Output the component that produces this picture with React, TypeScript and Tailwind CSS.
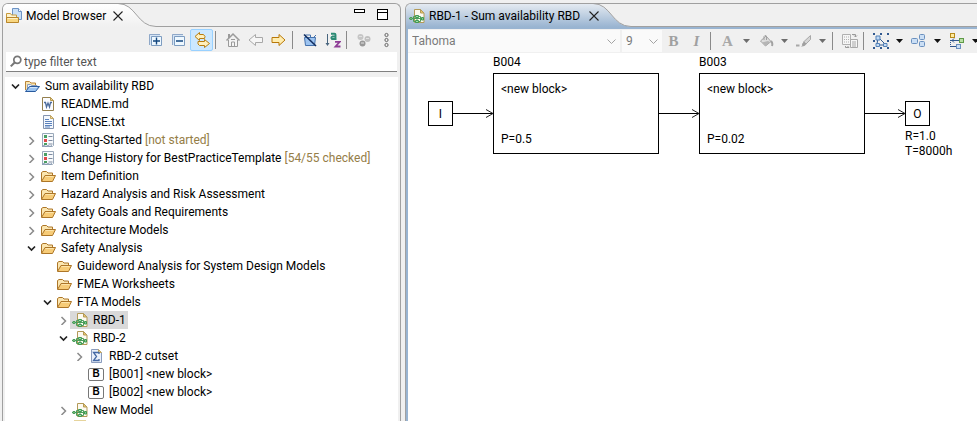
import type { ReactNode } from "react";

/* ---------- icons ---------- */

function Svg({ children, size = 16 }: { children: ReactNode; size?: number }) {
  return (
    <svg width={size} height={size} viewBox="0 0 16 16" fill="none" className="block shrink-0" aria-hidden="true">
      {children}
    </svg>
  );
}

const FolderIcon = () => (
  <Svg>
    <path d="M1.5 13V4.5L3 3.5h3.5L8 5h4.5v3" fill="#fbe6b0" stroke="#ad7628" />
    <path d="M1.5 13.5L5 7.5h10.5L12.5 13.5z" fill="#f7cc78" stroke="#ad7628" strokeLinejoin="round" />
    <path d="M5.5 8.5h8" stroke="#fde5ab" />
  </Svg>
);

const ProjectIcon = () => (
  <Svg>
    <path d="M1.5 12V3.5h4L7 5h4.5v3" fill="#fbe6b0" stroke="#b98539" />
    <path d="M3.5 12V6.5h3L8 7.5h5v2" fill="#e9f1fb" stroke="#8a9cba" />
    <path d="M1.5 13.5L5.5 8.5h10L11.5 13.5z" fill="#9cc4f0" stroke="#285a9e" strokeLinejoin="round" />
    <path d="M6 9.5h7" stroke="#d3e6fb" />
  </Svg>
);

const WordIcon = () => (
  <Svg>
    <path d="M2.5 1.5h8l3 3v10h-11z" fill="#fbfcff" stroke="#94804e" />
    <path d="M10.5 1.5v3h3z" fill="#e8cf93" stroke="#b89a50" />
    <path d="M4 6.5h1.5l1 4.5L8 7l1.5 4 1-4.5H12" stroke="#4d6c9c" strokeWidth="1.3" />
  </Svg>
);

const TextFileIcon = () => (
  <Svg>
    <path d="M3.5 1.5h7l3 3v10h-10z" fill="#f4f8fd" stroke="#8494b0" />
    <path d="M10.5 1.5v3h3z" fill="#f1dba2" stroke="#c4a762" />
    <path d="M5 5.5h4M5 7.5h7M5 9.5h7M5 11.5h7M5 13h5" stroke="#5b82bd" />
  </Svg>
);

const ChecklistIcon = () => (
  <Svg>
    <path d="M2.5 1.5h11v12l-1 1h-10z" fill="#f8fafc" stroke="#9aa9ba" />
    <path d="M2 14.5l2-1 2 1 2-1 2 1 2-1" stroke="#8497b0" />
    <path d="M4 3h3v3H4z" fill="#4a9e62" />
    <path d="M4 7h3v3H4z" fill="#e04848" />
    <path d="M4 11h3v2H4z" fill="#4a9e62" />
    <path d="M8.5 4.5h4M8.5 8.5h4M8.5 12h4" stroke="#7e8ba0" />
  </Svg>
);

const ModelIcon = () => (
  <Svg>
    <path d="M5.5 1.5h6L15 5v9.5H5.5z" fill="#fdfaf0" stroke="#b39a58" />
    <path d="M11.5 1.5V5H15z" fill="#edc76a" stroke="#b39a58" />
    <path d="M0 10.5h14M8 8.5v5" stroke="#4b9e5b" />
    <path d="M1 9.5h2v2H1z" fill="#8ccb94" stroke="#4b9e5b" />
    <path d="M6.5 7.5h3v2h-3zM6.5 12.5h3v2h-3z" fill="#a3dba8" stroke="#3f9a52" />
    <path d="M12.5 9.5h2V12h-2z" fill="#8ccb94" stroke="#3f9a52" />
    <path d="M6.5 8.5h-2v5h2M9.5 8.5h2v5h-2" stroke="#4b9e5b" />
  </Svg>
);

const SigmaIcon = () => (
  <Svg>
    <path d="M3.5 1.5h7l3 3v10h-10z" fill="#eaf0fa" stroke="#8b9cbd" />
    <path d="M10.5 1.5v3h3z" fill="#f1dba2" stroke="#c4a762" />
    <path d="M11 6V4.5H5.5l3 4-3 4H11V11" stroke="#4569a5" strokeWidth="1.3" />
  </Svg>
);

const NoteIcon = () => (
  <Svg>
    <path d="M2 0h12v15H2z" fill="#e6d49c" />
  </Svg>
);

const BlockIcon = () => (
  <span className="flex h-[13px] w-4 shrink-0 items-center justify-center rounded-xs border border-[#777] bg-white font-['Liberation_Sans',sans-serif] text-[10px] leading-none font-bold">
    B
  </span>
);

const BrowserIcon = () => (
  <Svg>
    <path d="M6.5.5h6l3 3v8h-9z" fill="#c9dff6" stroke="#6d93c4" />
    <path d="M12.5.5v3h3" fill="#fff" stroke="#6d93c4" />
    <path d="M.5 14.5v-9h4L5.5 7h5v2" fill="#fdf3cf" stroke="#c79a3d" />
    <path d="M.5 14.5v-5h12v5z" fill="#f8d680" stroke="#b8862c" />
    <path d="M1.5 10.5h10" stroke="#fdf0c5" />
  </Svg>
);

const CloseIcon = () => (
  <Svg>
    <path d="M3.5 3.5l9 9M12.5 3.5l-9 9" stroke="#222" strokeWidth="1.1" />
  </Svg>
);

const ExpandAllIcon = ({ plus }: { plus?: boolean }) => (
  <Svg>
    <path d="M1 2h11v11H1z" fill="#d5e4f5" />
    <path d="M1.5 13V2.5H12" stroke="#8fa8c8" />
    <path d="M3.5 4.5h10v9h-10z" fill="#eef8ff" stroke="#7d9cc0" />
    <path d={plus ? "M5 9h7M8.5 5.5v7" : "M5 9h7"} stroke="#12467f" strokeWidth="1.4" />
  </Svg>
);

const LinkIcon = () => (
  <Svg>
    <path d="M10.5 6.5H5.5v2L1 4.5l4.5-4v2h4l1.5 2z" fill="#fff0bd" stroke="#b87d10" strokeLinejoin="round" />
    <path d="M4 9.5h6.5v-2l5 4-5 4v-2h-5L4 12z" fill="#fff0bd" stroke="#b87d10" strokeLinejoin="round" />
  </Svg>
);

const HomeIcon = () => (
  <Svg>
    <path d="M3.5 8v6.5h9V8" fill="#f4f4f4" stroke="#9a9a9a" />
    <path d="M1.5 8.5L8 2l6.5 6.5" stroke="#9a9a9a" strokeWidth="1.5" />
    <path d="M4 2v4" stroke="#9a9a9a" strokeWidth="2" />
    <path d="M6.5 14v-4h3v4M6 7.5h4" stroke="#9a9a9a" />
  </Svg>
);

const ArrowIcon = ({ forward }: { forward?: boolean }) =>
  forward ? (
    <Svg>
      <path d="M1 5.5h7v-3L14 8l-6 5.5v-3H1z" fill="#ffedb0" stroke="#b87808" strokeLinejoin="round" />
    </Svg>
  ) : (
    <Svg>
      <path d="M14.5 5.5h-7v-3L1 8l6.5 5.5v-3h7z" fill="#f6f6f6" stroke="#a8a8a8" strokeLinejoin="round" />
    </Svg>
  );

const HideFolderIcon = () => (
  <Svg>
    <path d="M3.5 5V3h5v2" stroke="#4471ac" />
    <path d="M2.5 5.5h11l-1 8h-9z" fill="#9cc3f0" stroke="#4471ac" />
    <path d="M12 5l2-2" stroke="#4471ac" />
    <path d="M2 2.5L14 14" stroke="#122f61" strokeWidth="1.6" />
  </Svg>
);

const SortIcon = () => (
  <Svg>
    <path d="M2.5 2v11" stroke="#48657e" />
    <path d="M.5 11h4l-2 3z" fill="#48657e" />
    <path d="M6 1.8h3.5q1 0 1 1v4.5M10.5 4.5h-3Q5.500 5.500 7 7h4.500" stroke="#2b8a74" strokeWidth="1.9" />
    <path d="M10 9.8h4.7l-4.2 4.700h5" stroke="#8e3d96" strokeWidth="1.8" />
  </Svg>
);

const SpheresIcon = () => (
  <Svg>
    <circle cx="4.5" cy="5" r="3" fill="#c6c6c6" />
    <circle cx="11.5" cy="7" r="3" fill="#c0c0c0" />
    <circle cx="6.5" cy="11.5" r="3" fill="#989898" />
    <path d="M3 4.5h3M5 11h3M10 6.5h3" stroke="#e1e1e1" />
  </Svg>
);

const KebabIcon = () => (
  <Svg>
    <circle cx="7.5" cy="3" r="1.6" stroke="#666" />
    <circle cx="7.5" cy="8" r="1.6" stroke="#666" />
    <circle cx="7.5" cy="13" r="1.6" stroke="#666" />
  </Svg>
);

const SearchIcon = () => (
  <Svg size={14}>
    <circle cx="9.5" cy="5.5" r="4" stroke="#777" strokeWidth="2" />
    <path d="M6.5 8.5L2 13" stroke="#777" strokeWidth="2.4" />
  </Svg>
);

const BucketIcon = () => (
  <Svg>
    <path d="M2.5 8L8 3l5 5.5L7.5 13z" fill="#dcdcdc" stroke="#a2a2a2" />
    <path d="M6 7V3.5Q7 1.5 8.5 3v4" stroke="#a2a2a2" />
    <path d="M4 9.5L10 8l2 1-4.5 4z" fill="#b5b5b5" />
    <path d="M13 8q2 2 1 5" stroke="#a2a2a2" strokeWidth="2" />
  </Svg>
);

const BrushIcon = () => (
  <Svg>
    <path d="M0 12.5h3.5" stroke="#a8a8a8" strokeWidth="2" />
    <path d="M14.5 2.5v4L10 11 7.5 9z" fill="#d5d5d5" stroke="#a8a8a8" />
    <path d="M8 8.5l2.5 2.5q-2 3-5.5 2.5 2-1 1-2.5z" fill="#a0a0a0" />
  </Svg>
);

const CopyStyleIcon = () => (
  <Svg>
    <path d="M.5 1.5h8v10h-8z" fill="#f6f6f6" stroke="#b0b0b0" />
    <path d="M2 4h5M2 6.5h5M2 9h5" stroke="#b0b0b0" strokeDasharray="1 1" />
    <path d="M8.5 6.5h7v8h-7z" fill="#f6f6f6" stroke="#a8a8a8" />
    <path d="M10 9h4M10 11h4M10 13h4" stroke="#a8a8a8" />
    <path d="M10 1.5h3.5V4M12 2.5L13.5 4 15 2.5M3.5 13v1.5H7M5.5 13L7 14.5" stroke="#999" />
  </Svg>
);

const SelectAllIcon = () => (
  <Svg>
    <path
      d="M0 0h2v2H0zM7 0h2v2H7zM14 0h2v2h-2zM0 7h2v2H0zM14 7h2v2h-2zM0 14h2v2H0zM7 14h2v2H7zM14 14h2v2h-2z"
      fill="#31598f"
    />
    <path d="M5 5l-1 6M6 5l6 6M5 12h6" stroke="#31598f" />
    <path d="M3 3h4v4H3zM3 10.5h3.5v3H3zM10.5 10.5H14v3h-3.5z" fill="#c2daf4" stroke="#5582b8" />
  </Svg>
);

const AlignIcon = () => (
  <Svg>
    <rect x=".5" y="5.5" width="6" height="5" rx="1" fill="#cbdff5" stroke="#6a90bf" />
    <rect x="8.5" y="1.5" width="5" height="5" rx="1" fill="#cbdff5" stroke="#6a90bf" />
    <rect x="8.5" y="8.5" width="5" height="5" rx="1" fill="#cbdff5" stroke="#6a90bf" />
  </Svg>
);

const RouteIcon = () => (
  <Svg>
    <rect x="1.5" y=".5" width="4" height="4" fill="#ffeb9f" stroke="#b88c1c" />
    <path d="M1.5 7v8" stroke="#31598f" strokeDasharray="1 1" />
    <path d="M2 7.5h8M5 5.5l-2 2 2 2M2 13.5h6" stroke="#31598f" />
    <rect x="10.5" y="5.5" width="4" height="4" fill="#b8e0a4" stroke="#5f9a48" />
    <rect x="7.5" y="11.5" width="4" height="4" fill="#cbdff5" stroke="#6a90bf" />
  </Svg>
);

/* ---------- shared pieces ---------- */

function ToolButton({ label, active, children }: { label: string; active?: boolean; children: ReactNode }) {
  return (
    <button
      type="button"
      aria-label={label}
      className={
        active
          ? "flex h-[22px] w-[23px] shrink-0 items-center justify-center rounded-xs border border-[#99d1ff] bg-[#cce8ff]"
          : "flex h-[22px] w-[23px] shrink-0 items-center justify-center"
      }
    >
      {children}
    </button>
  );
}

const Separator = () => (
  <span className="flex w-2 shrink-0 pl-0.5">
    <span className="h-[18px] w-px bg-[#8a8a8a]" />
  </span>
);

const DropArrow = ({ label, disabled }: { label: string; disabled?: boolean }) => (
  <button type="button" aria-label={label} className="flex h-[22px] w-[15px] shrink-0 items-center justify-center">
    <svg width="7" height="4" viewBox="0 0 7 4" aria-hidden="true">
      <path d="M0 0h7L3.5 4z" fill={disabled ? "#6d6d6d" : "#111"} />
    </svg>
  </button>
);

function Combo({ label, value, wide }: { label: string; value: string; wide?: boolean }) {
  return (
    <div className={wide ? "relative w-[212px] shrink-0" : "relative w-10 shrink-0"}>
      <select
        aria-label={label}
        defaultValue={value}
        className="h-[22px] w-full appearance-none bg-[#fafafa] pl-1 text-[#7a7a7a] outline-none"
      >
        <option>{value}</option>
      </select>
      <svg width="9" height="5" viewBox="0 0 9 5" className="pointer-events-none absolute top-[9px] right-1" aria-hidden="true">
        <path d="M.5.5l4 4 4-4" fill="none" stroke="#a3a3a3" />
      </svg>
    </div>
  );
}

/* ---------- model browser ---------- */

type Row = {
  level: number;
  icon: ReactNode;
  label?: string;
  note?: string;
  state?: "open" | "closed";
  selected?: boolean;
};

const rows: Row[] = [
  { level: 0, icon: <ProjectIcon />, label: "Sum availability RBD", state: "open" },
  { level: 1, icon: <WordIcon />, label: "README.md" },
  { level: 1, icon: <TextFileIcon />, label: "LICENSE.txt" },
  { level: 1, icon: <ChecklistIcon />, label: "Getting-Started", note: "[not started]", state: "closed" },
  {
    level: 1,
    icon: <ChecklistIcon />,
    label: "Change History for BestPracticeTemplate",
    note: "[54/55 checked]",
    state: "closed",
  },
  { level: 1, icon: <FolderIcon />, label: "Item Definition", state: "closed" },
  { level: 1, icon: <FolderIcon />, label: "Hazard Analysis and Risk Assessment", state: "closed" },
  { level: 1, icon: <FolderIcon />, label: "Safety Goals and Requirements", state: "closed" },
  { level: 1, icon: <FolderIcon />, label: "Architecture Models", state: "closed" },
  { level: 1, icon: <FolderIcon />, label: "Safety Analysis", state: "open" },
  { level: 2, icon: <FolderIcon />, label: "Guideword Analysis for System Design Models" },
  { level: 2, icon: <FolderIcon />, label: "FMEA Worksheets" },
  { level: 2, icon: <FolderIcon />, label: "FTA Models", state: "open" },
  { level: 3, icon: <ModelIcon />, label: "RBD-1", state: "closed", selected: true },
  { level: 3, icon: <ModelIcon />, label: "RBD-2", state: "open" },
  { level: 4, icon: <SigmaIcon />, label: "RBD-2 cutset", state: "closed" },
  { level: 4, icon: <BlockIcon />, label: "[B001] <new block>" },
  { level: 4, icon: <BlockIcon />, label: "[B002] <new block>" },
  { level: 3, icon: <ModelIcon />, label: "New Model", state: "closed" },
  { level: 3, icon: <NoteIcon /> },
];

const indents = ["pl-[3px]", "pl-[19px]", "pl-[35px]", "pl-[51px]", "pl-[67px]"];

function TreeRow({ row }: { row: Row }) {
  return (
    <li className={`flex h-[18px] items-center ${indents[row.level]}`}>
      {row.state ? (
        <button
          type="button"
          aria-label={`Toggle ${row.label}`}
          className="flex h-4 w-4 shrink-0 items-center justify-center"
        >
          <svg width="10" height="10" viewBox="0 0 10 10" fill="none" aria-hidden="true">
            {row.state === "open" ? (
              <path d="M1 3.5L4.5 7 8 3.5" stroke="#222" strokeWidth="1.7" />
            ) : (
              <path d="M2.500 2l4 4-4 4" stroke="#8a8a8a" strokeWidth="1.5" />
            )}
          </svg>
        </button>
      ) : (
        <span className="w-4 shrink-0" />
      )}
      <span
        className={
          row.selected ? "-ml-0.5 flex h-[18px] items-center bg-[#d9d9d9] pr-0.5 pl-0.5" : "flex items-center"
        }
      >
        {row.icon}
        <span className="ml-[5px] whitespace-pre">
          {row.label}
          {row.note && <span className="text-[#957d47]"> {row.note}</span>}
        </span>
      </span>
    </li>
  );
}

function ModelBrowser() {
  return (
    <section className="flex min-w-0 flex-col overflow-hidden rounded-t-md border-x border-t border-[#a0a0a0]">
      <header className="flex h-[23px] shrink-0">
        <div className="relative flex w-[153px] shrink-0 items-center pl-[3px]">
          <svg width="153" height="23" viewBox="0 0 153 23" className="absolute inset-0" aria-hidden="true">
            <defs>
              <linearGradient id="browserTab" x1="0" y1="0" x2="0" y2="1">
                <stop offset="0" stopColor="#ffffff" />
                <stop offset="1" stopColor="#f0f0f0" />
              </linearGradient>
            </defs>
            <path d="M0 0H115C133 0 134 22.5 153 22.5V23H0z" fill="url(#browserTab)" />
            <path d="M115 -.5C133 -.5 134 22.5 153 22.5" fill="none" stroke="#a0a0a0" />
          </svg>
          <div className="relative flex w-[120px] items-center">
            <BrowserIcon />
            <h2 className="ml-1 flex-1 whitespace-nowrap">Model Browser</h2>
            <button type="button" aria-label="Close Model Browser">
              <CloseIcon />
            </button>
          </div>
        </div>
        <div className="flex flex-1 items-start justify-end gap-3 border-b border-[#a0a0a0] pt-[5px] pr-3">
          <button type="button" aria-label="Minimize" className="h-1 w-[11px] border border-black bg-white" />
          <button type="button" aria-label="Maximize" className="flex h-[11px] w-[11px] border border-black bg-white pt-0.5">
            <span className="h-px w-full bg-black" />
          </button>
        </div>
      </header>

      <div className="flex h-[25px] shrink-0 items-center justify-end pr-0.5" role="toolbar" aria-label="Browser tools">
        <ToolButton label="Expand all">
          <ExpandAllIcon plus />
        </ToolButton>
        <ToolButton label="Collapse all">
          <ExpandAllIcon />
        </ToolButton>
        <ToolButton label="Link with editor" active>
          <LinkIcon />
        </ToolButton>
        <Separator />
        <ToolButton label="Home">
          <HomeIcon />
        </ToolButton>
        <ToolButton label="Back">
          <ArrowIcon />
        </ToolButton>
        <ToolButton label="Forward">
          <ArrowIcon forward />
        </ToolButton>
        <Separator />
        <ToolButton label="Hide folders">
          <HideFolderIcon />
        </ToolButton>
        <ToolButton label="Sort">
          <SortIcon />
        </ToolButton>
        <Separator />
        <ToolButton label="Group">
          <SpheresIcon />
        </ToolButton>
        <ToolButton label="View menu">
          <KebabIcon />
        </ToolButton>
      </div>

      <label className="mx-[3px] flex h-5 shrink-0 items-center border-b border-[#808080] bg-white pl-[3px]">
        <SearchIcon />
        <input
          type="text"
          aria-label="Filter"
          placeholder="type filter text"
          className="ml-px min-w-0 flex-1 bg-transparent outline-none placeholder:text-[#555]"
        />
      </label>

      <ul className="mx-0.5 mt-[5px] min-h-0 flex-1 overflow-hidden bg-white">
        {rows.map((row, i) => (
          <TreeRow key={i} row={row} />
        ))}
      </ul>
    </section>
  );
}

/* ---------- diagram editor ---------- */

function DiagramBlock({ place, id, p }: { place: string; id: string; p: string }) {
  return (
    <div className={`absolute top-0.5 w-[166px] ${place}`}>
      <p className="h-[18px] leading-[14px]">{id}</p>
      <div className="flex h-[81px] flex-col justify-between border border-black px-[7px] pt-2 pb-[7px] leading-[14px]">
        <p>&lt;new block&gt;</p>
        <p>{p}</p>
      </div>
    </div>
  );
}

function Diagram() {
  return (
    <div className="relative min-h-0 flex-1 overflow-hidden bg-white">
      <svg width="569" height="120" viewBox="0 0 569 120" className="absolute top-0 left-0" fill="none" aria-hidden="true">
        <path d="M45 60.5h40M251 60.5h40M457 60.5h40" stroke="#000" />
        <path d="M78 56.5l7 4-7 4M284 56.5l7 4-7 4M490 56.5l7 4-7 4" stroke="#222" />
      </svg>
      <div className="absolute top-12 left-5 flex h-[25px] w-[25px] items-center justify-center border border-black">I</div>
      <DiagramBlock place="left-[85px]" id="B004" p="P=0.5" />
      <DiagramBlock place="left-[291px]" id="B003" p="P=0.02" />
      <div className="absolute top-12 left-[497px]">
        <div className="flex h-[25px] w-[25px] items-center justify-center border border-black">O</div>
        <p className="mt-[3px] leading-[15px]">R=1.0</p>
        <p className="leading-[15px]">T=8000h</p>
      </div>
    </div>
  );
}

function Editor() {
  return (
    <section className="flex min-w-0 flex-col overflow-hidden rounded-tl-md border-t border-l border-[#a0a0a0]">
      <header className="flex h-[23px] shrink-0">
        <div className="relative flex w-[225px] shrink-0 items-center pl-[3px]">
          <svg width="225" height="23" viewBox="0 0 225 23" className="absolute inset-0" aria-hidden="true">
            <defs>
              <linearGradient id="editorTab" x1="0" y1="0" x2="0" y2="1">
                <stop offset="0" stopColor="#e4eaf1" />
                <stop offset="1" stopColor="#99b4d1" />
              </linearGradient>
            </defs>
            <path d="M0 0H187C205 0 206 22.5 225 22.5V23H0z" fill="url(#editorTab)" />
            <path d="M187 -.5C205 -.5 206 22.5 225 22.5" fill="none" stroke="#a0a0a0" />
          </svg>
          <div className="relative flex w-[193px] items-center">
            <ModelIcon />
            <h2 className="ml-1 flex-1 whitespace-nowrap">RBD-1 - Sum availability RBD</h2>
            <button type="button" aria-label="Close RBD-1">
              <CloseIcon />
            </button>
          </div>
        </div>
        <div className="flex-1 border-b border-[#a0a0a0]" />
      </header>

      <div className="flex min-h-0 flex-1 flex-col border-t-2 border-l-2 border-[#99b4d1]">
        <div className="flex h-6 shrink-0 items-center overflow-hidden" role="toolbar" aria-label="Format tools">
          <Combo label="Font" value="Tahoma" wide />
          <span className="w-0.5 shrink-0" />
          <Combo label="Font size" value="9" />
          <ToolButton label="Bold">
            <span className="font-['Liberation_Serif',serif] text-[15px] font-bold text-[#a0a0a0]">B</span>
          </ToolButton>
          <ToolButton label="Italic">
            <span className="font-['Liberation_Serif',serif] text-[15px] font-bold text-[#a0a0a0] italic">I</span>
          </ToolButton>
          <Separator />
          <ToolButton label="Font color">
            <span className="font-['Liberation_Serif',serif] text-[15px] font-bold text-[#a8a8a8]">A</span>
          </ToolButton>
          <DropArrow label="Font color menu" disabled />
          <ToolButton label="Fill color">
            <BucketIcon />
          </ToolButton>
          <DropArrow label="Fill color menu" disabled />
          <ToolButton label="Line color">
            <BrushIcon />
          </ToolButton>
          <DropArrow label="Line color menu" disabled />
          <Separator />
          <ToolButton label="Copy appearance">
            <CopyStyleIcon />
          </ToolButton>
          <Separator />
          <ToolButton label="Select all">
            <SelectAllIcon />
          </ToolButton>
          <DropArrow label="Select menu" />
          <ToolButton label="Align">
            <AlignIcon />
          </ToolButton>
          <DropArrow label="Align menu" />
          <ToolButton label="Router">
            <RouteIcon />
          </ToolButton>
          <DropArrow label="Router menu" />
        </div>
        <Diagram />
      </div>
    </section>
  );
}

export default function App() {
  return (
    <main className="grid h-screen grid-cols-[399fr_572fr] gap-1 overflow-hidden bg-[#f0f0f0] pt-[3px] pl-0.5 font-['Roboto',sans-serif] text-[12px] text-black">
      <ModelBrowser />
      <Editor />
    </main>
  );
}
